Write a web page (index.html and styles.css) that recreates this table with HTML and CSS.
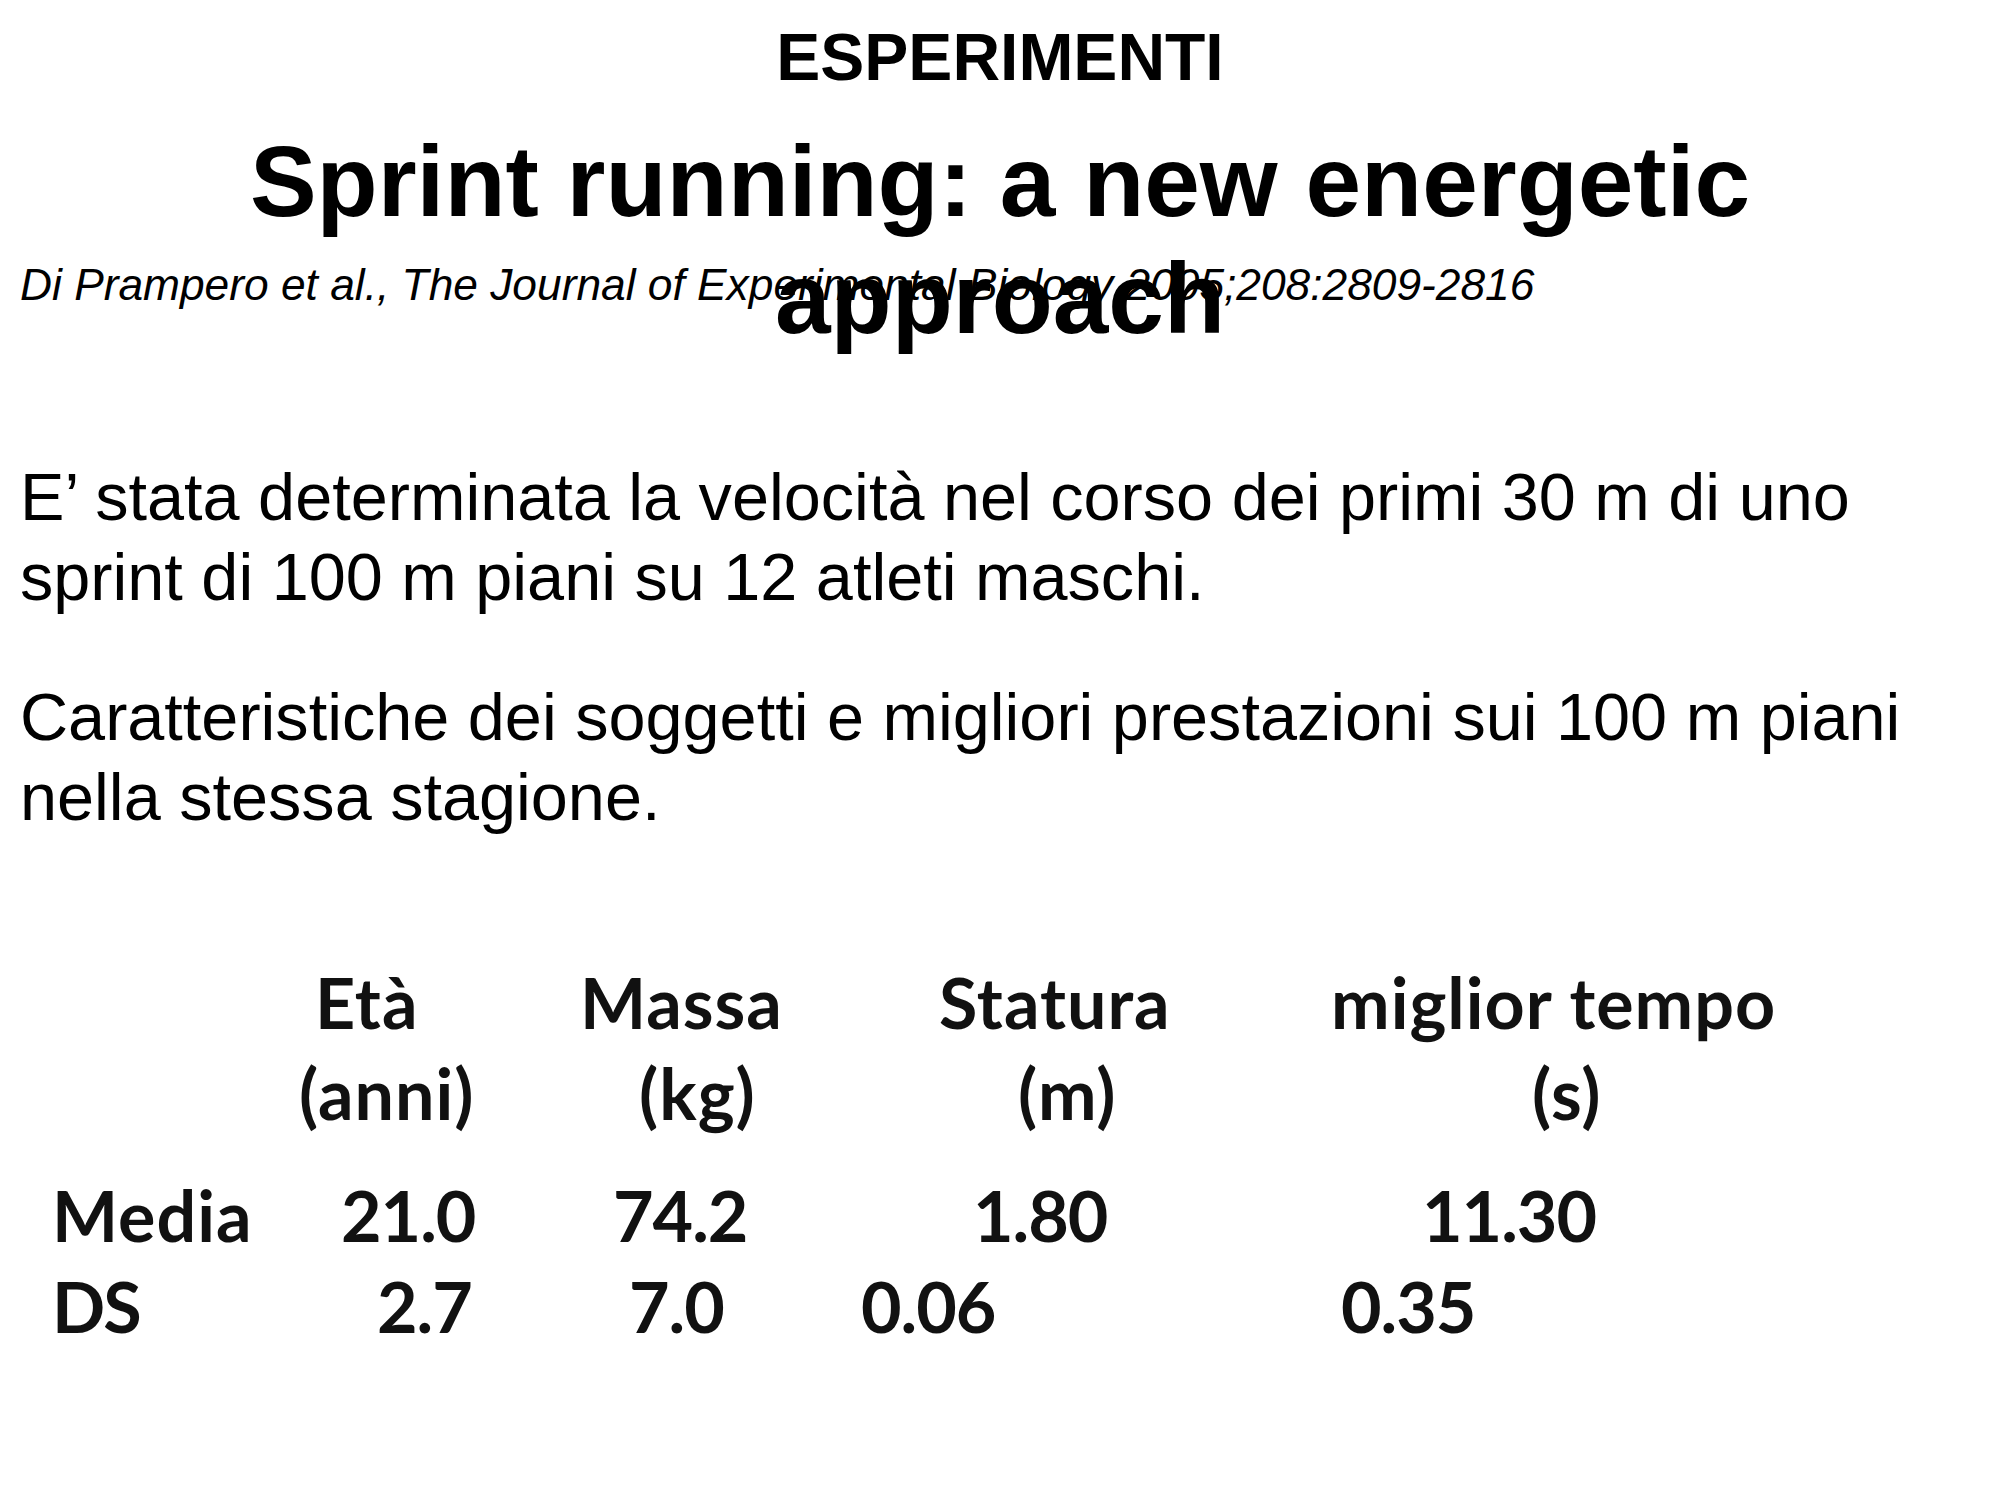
FILE: index.html
```html
<!DOCTYPE html>
<html lang="it">
<head>
<meta charset="utf-8">
<title>ESPERIMENTI</title>
<link rel="stylesheet" href="styles.css">
</head>
<body>
<main class="slide">
  <h2 class="kicker">ESPERIMENTI</h2>
  <div class="title-stack">
    <h1 class="title">Sprint running: a new energetic approach</h1>
    <p class="citation">Di Prampero et al., The Journal of Experimental Biology 2005;208:2809-2816</p>
  </div>
  <p class="body-text first">E’ stata determinata la velocità nel corso dei primi 30 m di uno sprint di 100 m piani su 12 atleti maschi.</p>
  <p class="body-text second">Caratteristiche dei soggetti e migliori prestazioni sui 100 m piani nella stessa stagione.</p>

  <div class="data-table">
    <div class="row head">
      <span class="cell c0"></span>
      <span class="cell c1 i-eta">Età</span>
      <span class="cell c2 i-massa">Massa</span>
      <span class="cell c3 i-statura">Statura</span>
      <span class="cell c4 i-tempo">miglior tempo</span>
    </div>
    <div class="row units">
      <span class="cell c0"></span>
      <span class="cell c1 i-anni">(anni)</span>
      <span class="cell c2 i-kg">(kg)</span>
      <span class="cell c3 i-m">(m)</span>
      <span class="cell c4 i-s">(s)</span>
    </div>
    <div class="row media">
      <span class="cell c0">Media</span>
      <span class="cell c1 num i-m1">21.0</span>
      <span class="cell c2 num i-m2">74.2</span>
      <span class="cell c3 num i-m3">1.80</span>
      <span class="cell c4 num i-m4">11.30</span>
    </div>
    <div class="row ds">
      <span class="cell c0 narrow">DS</span>
      <span class="cell c1 num i-d1">2.7</span>
      <span class="cell c2 num i-d2">7.0</span>
      <span class="cell c3 num i-d3">0.06</span>
      <span class="cell c4 num i-d4">0.35</span>
    </div>
  </div>
</main>
</body>
</html>
```

FILE: styles.css
```css
html, body {
  margin: 0;
  padding: 0;
  background: #ffffff;
}

body {
  width: 2000px;
  height: 1500px;
  overflow: hidden;
  color: #000000;
  font-family: "Liberation Sans", Arial, sans-serif;
}

.slide {
  display: flex;
  flex-direction: column;
  padding-top: 20px;
}

.kicker {
  margin: 0;
  font-size: 66px;
  line-height: 74px;
  font-weight: 700;
  text-align: center;
}

.title-stack {
  display: grid;
  margin-top: 29px;
}

.title-stack > * {
  grid-area: 1 / 1;
}

.title {
  margin: 0;
  font-size: 100px;
  line-height: 117px;
  font-weight: 700;
  text-align: center;
  padding: 0 200px;
}

.citation {
  margin: 137px 0 0 20px;
  align-self: start;
  font-size: 44.3px;
  line-height: 50px;
  font-style: italic;
  font-weight: 400;
}

.body-text {
  margin: 0;
  padding: 0 20px;
  font-size: 66.6px;
  line-height: 80px;
}

.body-text.first {
  margin-top: 100px;
}

.body-text.second {
  margin-top: 60px;
}

/* table (originally an embedded picture, Calibri bold) */
.data-table {
  margin-top: 120px;
  display: flex;
  flex-direction: column;
  font-family: Lato, "Open Sans", sans-serif;
  font-weight: 700;
  font-size: 70px;
  letter-spacing: 1px;
  line-height: 91px;
  color: #111111;
}

.row {
  display: flex;
  white-space: nowrap;
}

.row.media {
  margin-top: 31px;
}

.cell {
  display: block;
  flex: none;
  box-sizing: border-box;
}

.cell.num {
  letter-spacing: -1px;
}

.cell.narrow {
  letter-spacing: -2px;
}

.c0 { width: 297px; padding-left: 52px; }
.c1 { width: 283px; }
.c2 { width: 281px; }
.c3 { width: 469px; }
.c4 { width: 560px; }

.i-eta     { padding-left: 18px; }
.i-massa   { padding-left: 0; }
.i-statura { padding-left: 78px; }
.i-tempo   { padding-left: 1px; }

.i-anni { padding-left: 2px; }
.i-kg   { padding-left: 59px; }
.i-m    { padding-left: 157px; }
.i-s    { padding-left: 202px; }

.i-m1 { padding-left: 44px; }
.i-m2 { padding-left: 33px; }
.i-m3 { padding-left: 112px; }
.i-m4 { padding-left: 92px; }

.i-d1 { padding-left: 80px; }
.i-d2 { padding-left: 49px; }
.i-d3 { padding-left: 0; }
.i-d4 { padding-left: 11px; }
```
